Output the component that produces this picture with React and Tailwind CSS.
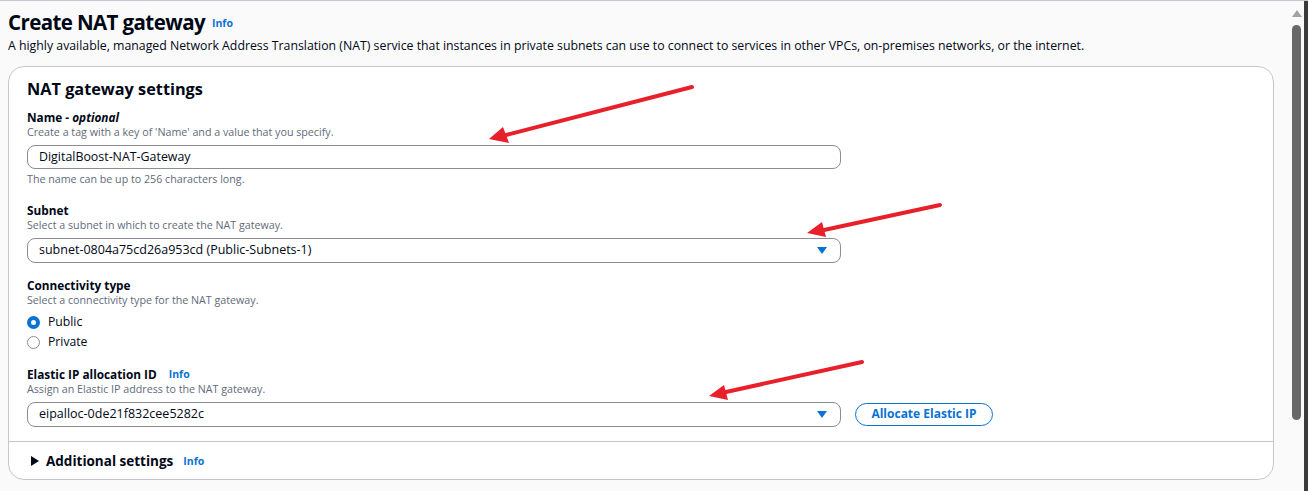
import React from 'react'

const font = { fontFamily: '"Open Sans", "Noto Sans", sans-serif' }

const Info = ({ className = '' }) => (
  <span className={`text-[10.5px] font-bold text-[#0972d3] ${className}`}>Info</span>
)

const Label = ({ children, info }) => (
  <div className="flex h-4 items-center text-[11.8px] font-bold leading-4 text-[#000716]">
    {children}
    {info && <Info className="ml-[12px]" />}
  </div>
)

const Hint = ({ children }) => (
  <div className="h-[14px] text-[10.7px] leading-[14px] text-[#5f6b7a]">{children}</div>
)

const Caret = () => (
  <svg width="10" height="7" viewBox="0 0 10 7" className="fill-[#0972d3]">
    <path d="M0 0h10L5 7z" />
  </svg>
)

const Select = ({ value, className = '' }) => (
  <div className={`flex h-[25px] w-[814px] items-center justify-between rounded-lg border border-[#8c8c94] bg-white pl-[11px] pr-[13px] ${className}`}>
    <span className="text-[12.5px] text-[#000716]">{value}</span>
    <Caret />
  </div>
)

const Radio = ({ label, checked }) => (
  <div className="flex h-5 items-center gap-[8px]">
    {checked ? (
      <span className="h-[13px] w-[13px] rounded-full border-[4px] border-[#0972d3] bg-white" />
    ) : (
      <span className="h-[13px] w-[13px] rounded-full border border-[#8c8c94] bg-white" />
    )}
    <span className="text-[12.2px] text-[#000716]">{label}</span>
  </div>
)

const Arrows = () => (
  <svg className="pointer-events-none absolute inset-0" width="1308" height="491">
    <g stroke="#e8202a" strokeWidth="4" strokeLinecap="round" fill="#e8202a">
      <line x1="692" y1="86" x2="506" y2="134" />
      <line x1="940" y1="204" x2="824" y2="229" />
      <line x1="862" y1="361" x2="726" y2="391" />
    </g>
    <g fill="#e8202a">
      <path d="M489 138 L503 126 L509 142 Z" />
      <path d="M807 232 L822 221 L826 236 Z" />
      <path d="M709 395 L724 384 L728 399 Z" />
    </g>
  </svg>
)

export default function App() {
  return (
    <div className="relative flex h-[491px] w-[1308px] overflow-hidden border-t border-[#c6c6cd] bg-[#fafafa]" style={font}>
      <main className="flex-1 pl-2 pr-[16px]">
        <div className="mt-[6px] flex h-[30px] items-center">
          <h1 className="text-[20.5px] font-bold leading-[30px] tracking-[-0.6px] text-[#000716]">Create NAT gateway</h1>
          <Info className="ml-[7px] mt-[4px]" />
        </div>
        <p className="h-[18px] text-[12.3px] leading-[18px] text-[#000716]">
          A highly available, managed Network Address Translation (NAT) service that instances in private subnets can use to connect to services in other VPCs, on-premises networks, or the internet.
        </p>

        <section className="mt-[11px] h-[414px] rounded-[16px] border border-[#c6c6cd] bg-white">
          <div className="px-[18px] pt-[10px]">
            <h2 className="h-6 text-[16.3px] font-bold leading-6 text-[#000716]">NAT gateway settings</h2>

            <div className="mt-[8px]">
              <Label>
                Name -&nbsp;<i>optional</i>
              </Label>
              <Hint>Create a tag with a key of 'Name' and a value that you specify.</Hint>
              <div className="mt-[6px] flex h-6 w-[814px] items-center rounded-lg border border-[#8c8c94] bg-white pl-[11px]">
                <span className="text-[12.4px] text-[#000716]">DigitalBoost-NAT-Gateway</span>
              </div>
              <div className="mt-[3px] h-[14px] text-[10.7px] leading-[14px] text-[#5f6b7a]">
                The name can be up to 256 characters long.
              </div>
            </div>

            <div className="mt-4">
              <Label>Subnet</Label>
              <Hint>Select a subnet in which to create the NAT gateway.</Hint>
              <Select className="mt-[6px]" value="subnet-0804a75cd26a953cd (Public-Subnets-1)" />
            </div>

            <div className="mt-[14px]">
              <Label>Connectivity type</Label>
              <Hint>Select a connectivity type for the NAT gateway.</Hint>
              <div className="mt-[5px]">
                <Radio label="Public" checked />
                <Radio label="Private" />
              </div>
            </div>

            <div className="mt-[14px]">
              <Label info>Elastic IP allocation ID</Label>
              <Hint>Assign an Elastic IP address to the NAT gateway.</Hint>
              <div className="mt-[6px] flex items-center gap-[14px]">
                <Select value="eipalloc-0de21f832cee5282c" />
                <button className="mb-[1px] flex h-[23px] w-[138px] items-center justify-center rounded-full border-[1.5px] border-[#0972d3] text-[12px] font-bold text-[#0972d3]">
                  Allocate Elastic IP
                </button>
              </div>
            </div>
          </div>

          <div className="mt-[14px] border-t border-[#c6c6cd]" />

          <div className="mt-[9px] flex h-5 items-center pl-[22px]">
            <svg width="8" height="10" viewBox="0 0 8 10" className="fill-[#000716]">
              <path d="M0 0l8 5-8 5z" />
            </svg>
            <span className="ml-[7px] text-[13.5px] font-bold text-[#000716]">Additional settings</span>
            <Info className="ml-[10px] mt-[2px]" />
          </div>
        </section>
      </main>

      <div className="relative w-[14px] bg-[#fafafa]">
        <svg width="10" height="7" viewBox="0 0 10 7" className="absolute left-[2px] top-[9px] fill-[#a3a3a3]">
          <path d="M5 0l5 7H0z" />
        </svg>
        <div className="absolute left-[2px] top-[24px] h-[395px] w-[9px] rounded-full bg-[#686868]" />
      </div>
      <div className="w-[4px] bg-[#3b3b3b]" />

      <Arrows />
    </div>
  )
}
